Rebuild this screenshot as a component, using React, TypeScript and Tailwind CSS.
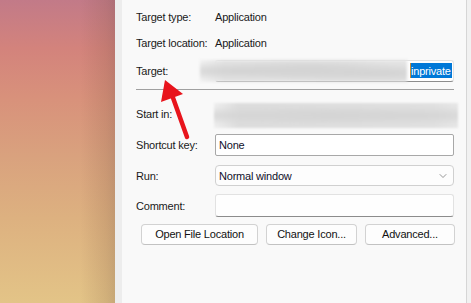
import { ChevronDown } from 'lucide-react';

const field = 'w-[239px] rounded-[3px] border border-[#e2e2e2] border-b-[#8c8c8c] bg-[#fefefe]';
const btn =
  'flex h-[21px] items-center justify-center rounded-[4px] border border-[#d2d2d2] border-b-[#c2c2c2] bg-[#fdfdfd] text-[#111]';

function Label({ children }: { children: React.ReactNode }) {
  return <div className="w-[79px] shrink-0 leading-[14px] text-[#1a1a1a]">{children}</div>;
}

export default function App() {
  return (
    <div className="relative flex h-[303px] w-[471px] overflow-hidden font-['Segoe_UI','Liberation_Sans',Arial,sans-serif] text-[11px] tracking-[-0.2px]">
      {/* wallpaper */}
      <div className="h-full w-[115px] shrink-0 bg-[linear-gradient(to_right,transparent_70%,rgba(120,80,60,0.16)_92%,rgba(100,70,60,0.22)),linear-gradient(to_bottom,#c27a88_0%,#d3837c_16%,#d8917b_32%,#d9a27e_52%,#ddb180_72%,#e3c487_100%)]" />
      <div className="h-full w-[7px] shrink-0 bg-[#ededed]" />

      {/* properties panel */}
      <div className="flex h-full w-[344px] shrink-0 flex-col bg-[#f9f9f9] pl-[14px]">
        <div className="mt-[7px] flex h-[20px] items-center">
          <Label>Target type:</Label>
          <div className="leading-[14px] text-[#1a1a1a]">Application</div>
        </div>
        <div className="mt-[6px] flex h-[20px] items-center">
          <Label>Target location:</Label>
          <div className="leading-[14px] text-[#1a1a1a]">Application</div>
        </div>
        <div className="mt-[7px] flex h-[21px] items-center">
          <Label>Target:</Label>
          <div className={`${field} flex h-[22px] items-center`}>
            <div className="-ml-[16px] h-[22px] w-[207px] shrink-0 bg-[radial-gradient(ellipse_at_20%_50%,#d2d2d2,transparent_60%),radial-gradient(ellipse_at_55%_40%,#d4d4d4,transparent_55%),radial-gradient(ellipse_at_85%_60%,#d2d2d2,transparent_55%),linear-gradient(to_right,#f0f0f0,#e2e2e2_12%,#e4e4e4)] blur-[1.5px]" />
            <div className="ml-[3px] h-[15px] w-px shrink-0 bg-[#c88a3a]" />
            <div className="flex h-[15px] items-center bg-[#0078d7] pr-[1px] leading-[14px] text-white">inprivate</div>
          </div>
        </div>
        <div className="mt-[8px] h-px w-[318px] bg-[#a0a0a0]" />
        <div className="mt-[12px] flex h-[26px] items-start">
          <div className="pt-[5px]">
            <Label>Start in:</Label>
          </div>
          <div className="-ml-[1px] mt-[1px] h-[25px] w-[244px] bg-[radial-gradient(ellipse_at_15%_50%,#d6d6d6,transparent_55%),radial-gradient(ellipse_at_45%_50%,#d4d4d4,transparent_50%),radial-gradient(ellipse_at_80%_50%,#d5d5d5,transparent_55%),linear-gradient(to_right,#eeeeee,#dcdcdc_10%,#e0e0e0_90%,#e6e6e6)] blur-[1px]" />
        </div>
        <div className="mt-[6px] flex h-[22px] items-center">
          <Label>Shortcut key:</Label>
          <div className="flex h-[22px] w-[239px] items-center rounded-[2px] border border-[#a8a8a8] bg-white pl-[3px] leading-[14px] text-[#10102a]">
            None
          </div>
        </div>
        <div className="mt-[9px] flex h-[21px] items-center">
          <Label>Run:</Label>
          <div className="flex h-[21px] w-[239px] items-center justify-between rounded-[4px] border border-[#d0d0d0] bg-[#fdfdfd] pl-[3px] pr-[4px] leading-[14px] text-[#10102a]">
            <span>Normal window</span>
            <ChevronDown className="h-[12px] w-[12px] text-[#6a6a6a]" strokeWidth={1.4} />
          </div>
        </div>
        <div className="mt-[8px] flex h-[23px] items-center">
          <Label>Comment:</Label>
          <div className={`${field} h-[23px]`} />
        </div>
        <div className="ml-[5px] mt-[7px] flex h-[21px] items-center gap-[8px]">
          <div className={`${btn} w-[117px]`}>Open File Location</div>
          <div className={`${btn} w-[91px]`}>Change Icon...</div>
          <div className={`${btn} w-[90px]`}>Advanced...</div>
        </div>
      </div>

      <div className="h-full w-px shrink-0 bg-[#d6d6d6]" />
      <div className="h-full w-[4px] shrink-0 bg-[#f1f1f1]" />

      {/* red annotation arrow */}
      <svg className="pointer-events-none absolute left-0 top-0" width="471" height="303" viewBox="0 0 471 303">
        <line x1="187" y1="137" x2="172" y2="95" stroke="#e8141c" strokeWidth="4.5" strokeLinecap="round" />
        <polygon points="165,80 183,94 161,102" fill="#e8141c" />
      </svg>
    </div>
  );
}
